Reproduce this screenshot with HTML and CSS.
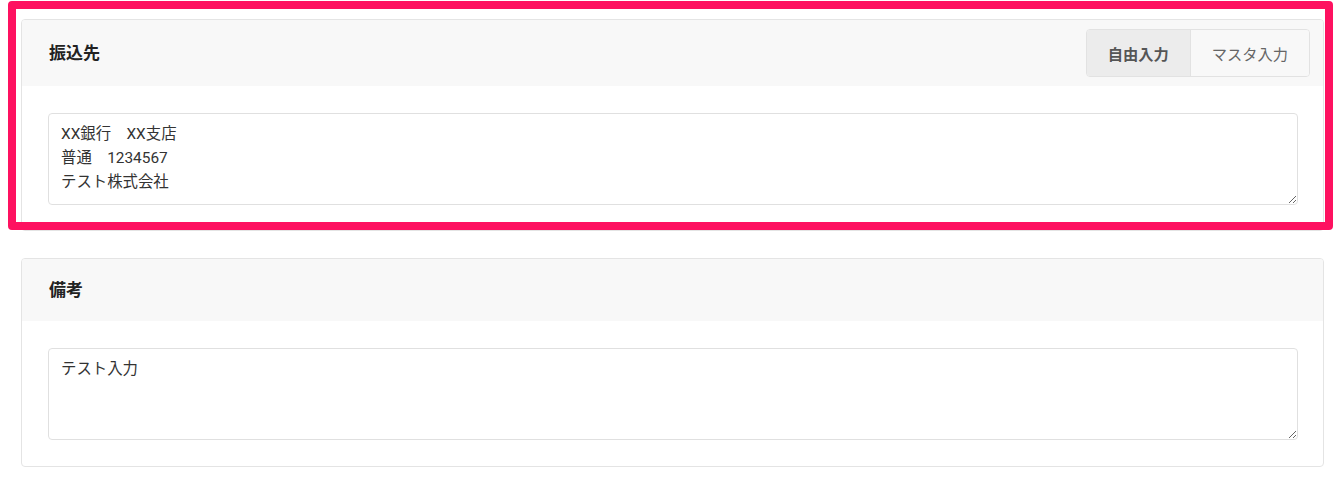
FILE: index.html
```html
<!DOCTYPE html>
<html lang="ja">
<head>
<meta charset="utf-8">
<link rel="stylesheet" href="styles.css">
</head>
<body>
<div class="page">
  <section class="card">
    <div class="card-header">
      <h2 class="card-title">振込先</h2>
      <div class="toggle">
        <button class="toggle-btn active">自由入力</button>
        <button class="toggle-btn">マスタ入力</button>
      </div>
    </div>
    <div class="card-body">
      <textarea class="field" rows="3">XX銀行　XX支店
普通　1234567
テスト株式会社</textarea>
    </div>
  </section>
  <section class="card">
    <div class="card-header">
      <h2 class="card-title">備考</h2>
    </div>
    <div class="card-body">
      <textarea class="field" rows="3">テスト入力</textarea>
    </div>
  </section>
  <div class="highlight"></div>
</div>
</body>
</html>
```
FILE: styles.css
```css
* { box-sizing: border-box; }
html, body { margin: 0; background: #fff; }
body {
  font-family: Roboto, "Noto Sans CJK JP", sans-serif;
  color: #333;
}
.page {
  position: relative;
  padding: 19px 19px 0 21px;
  display: flex;
  flex-direction: column;
  gap: 27px;
}
.card {
  border: 1px solid #e4e4e4;
  border-radius: 4px;
  background: #fff;
  overflow: hidden;
}
.card-header {
  background: #f8f8f8;
  display: flex;
  align-items: center;
  justify-content: space-between;
  min-height: 62px;
  padding: 9px 13px 9px 27px;
}
.card-title {
  margin: 0;
  font-size: 17px;
  font-weight: 700;
  line-height: 22px;
  color: #222;
}
.toggle {
  display: flex;
  border: 1px solid #e2e2e2;
  border-radius: 4px;
  overflow: hidden;
}
.toggle-btn {
  font-family: inherit;
  font-size: 15.25px;
  color: #666;
  background: #f8f8f8;
  border: 0;
  height: 46px;
  padding: 0 21px 0 21px;
  margin: 0;
}
.toggle-btn + .toggle-btn { border-left: 1px solid #e2e2e2; }
.toggle-btn.active {
  background: #ececec;
  font-weight: 700;
  color: #555;
}
.card-body {
  padding: 27px 25px 26px 26px;
}
.card-body-tight {
  padding-bottom: 25px;
}
.field {
  display: block;
  width: 100%;
  height: 92px;
  margin: 0;
  border: 1px solid #e0e0e0;
  border-radius: 4px;
  padding: 8px 12px;
  font-family: inherit;
  font-size: 15.4px;
  line-height: 24px;
  color: #333;
  resize: vertical;
  background: #fff;
}
.card:first-child .card-body {
  padding-bottom: 25px;
}
.highlight {
  position: absolute;
  left: 8px;
  top: 1px;
  width: 1325px;
  height: 229px;
  border: 8px solid #fe1160;
  border-radius: 4px;
  pointer-events: none;
}
```
